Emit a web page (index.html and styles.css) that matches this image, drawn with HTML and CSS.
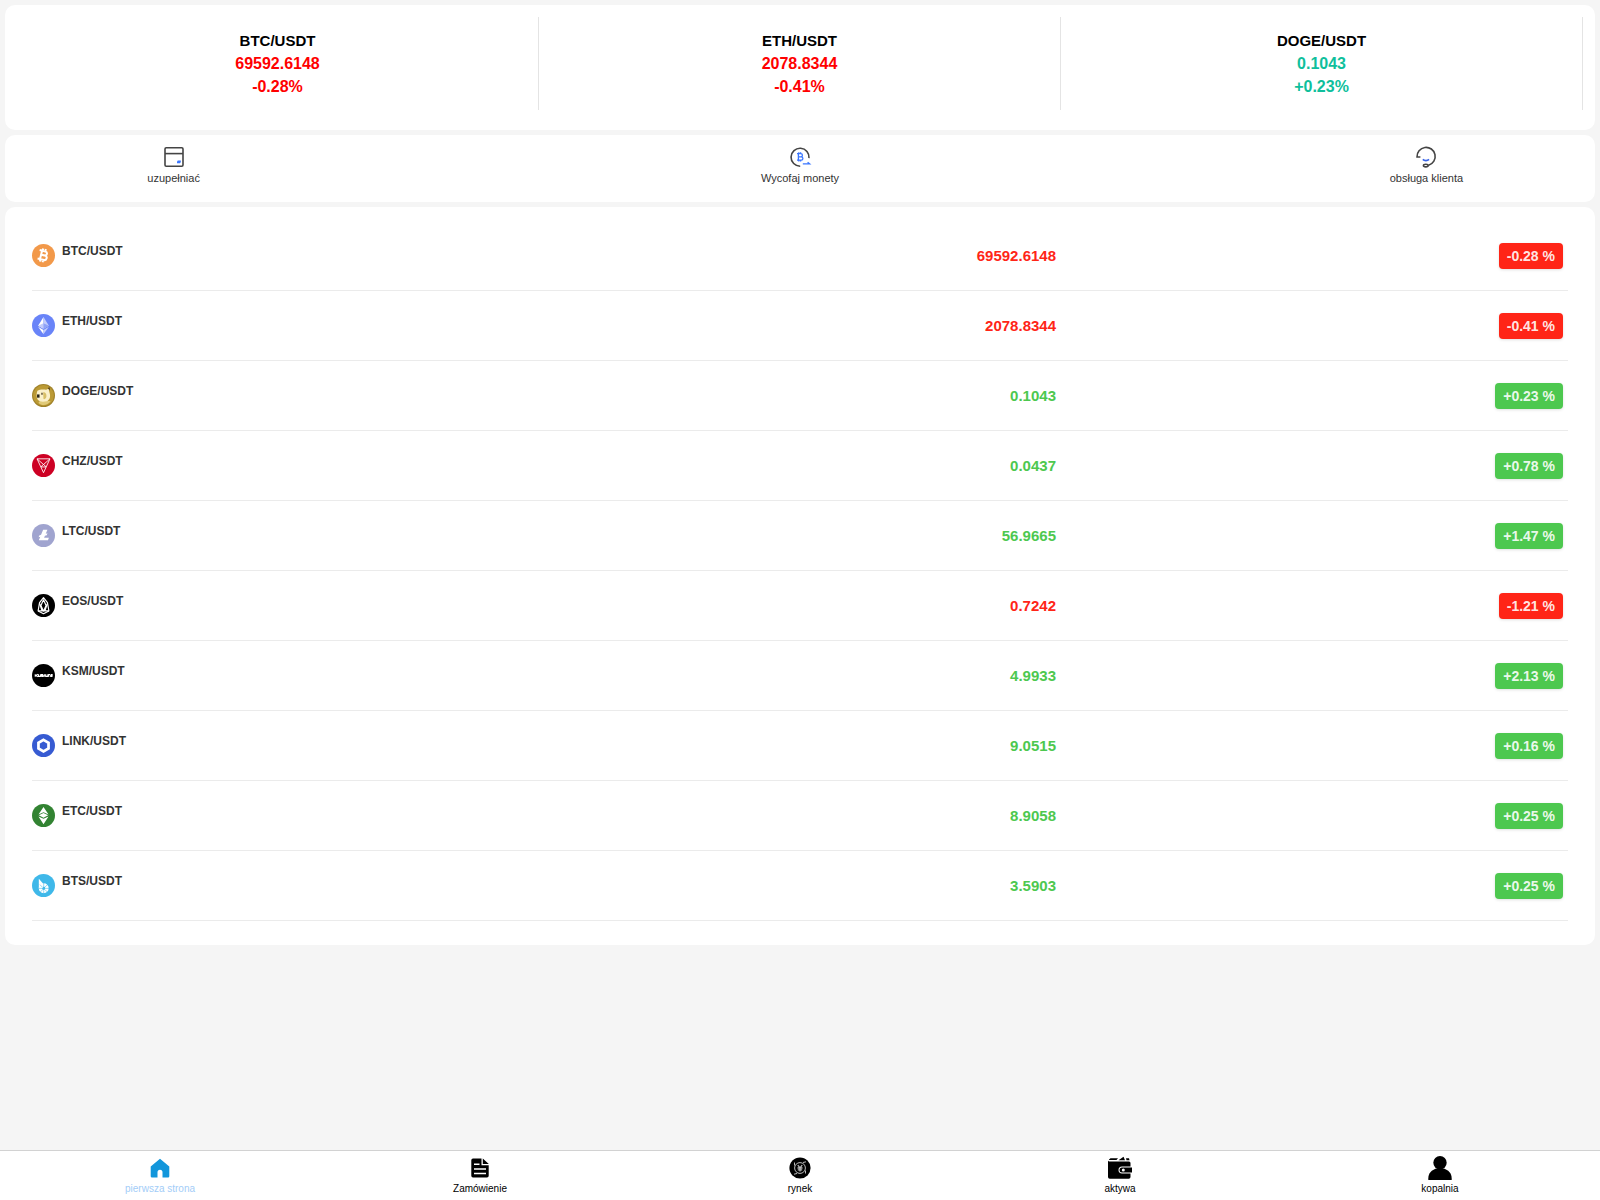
FILE: index.html
```html
<!DOCTYPE html>
<html lang="pl">
<head>
<meta charset="utf-8">
<meta name="viewport" content="width=device-width, initial-scale=1">
<title>pierwsza strona</title>
<link rel="stylesheet" href="styles.css">
</head>
<body>
<main class="page">
  <section class="card tickers">
    <div class="ticker down"><h2>BTC/USDT</h2><p>69592.6148</p><p>-0.28%</p></div>
    <div class="ticker down"><h2>ETH/USDT</h2><p>2078.8344</p><p>-0.41%</p></div>
    <div class="ticker up"><h2>DOGE/USDT</h2><p>0.1043</p><p>+0.23%</p></div>
  </section>

  <nav class="card actions">
    <a class="action" href="#deposit">
      <svg viewBox="0 0 24 24" fill="none" stroke="#444" stroke-width="1.6"><rect x="3" y="2.800" width="18" height="18.500" rx="1.2"/><path d="M3 8.600h18"/><path d="M15.800 15.400h3v1.600l-.8 1.200h-3v-1.800z" fill="#3a76ff" stroke="none"/></svg>
      <span>uzupełniać</span>
    </a>
    <a class="action" href="#withdraw">
      <svg viewBox="0 0 24 24" fill="none" stroke="#444" stroke-width="1.6"><path d="M21 13.2A9 9 0 1 0 12.2 21.2"/><g stroke="#3a76ff" stroke-width="1.300"><path d="M9 8.600h3.800a1.600 1.600 0 0 1 0 3.200H10.400h2.800a1.700 1.700 0 0 1 0 3.400H9M10.400 8.600v6.600M10.800 7.200v1.400M12.600 7.200v1.400M10.800 15.200v1.400M12.600 15.200v1.400"/><path d="M14.800 18.800h6.800l-2-1.600"/></g></svg>
      <span>Wycofaj monety</span>
    </a>
    <a class="action" href="#support">
      <svg viewBox="0 0 24 24" fill="none" stroke="#444" stroke-width="1.6"><path d="M6.400 12H3a9.100 9.100 0 1 1 11.600 8.200"/><ellipse cx="11.800" cy="20.600" rx="2.400" ry="1.300"/><path d="M8.800 14.400c1.600 1.600 4.600 1.600 6.200 0" stroke="#3a66e8" stroke-width="1.700"/></svg>
      <span>obsługa klienta</span>
    </a>
  </nav>

  <section class="card market">
    <table class="pairs">
      <tbody>
        <tr class="down">
          <td><div class="coin"><svg viewBox="0 0 32 32"><circle cx="16" cy="16" r="16" fill="#f2994a"/><g transform="rotate(14 16 16)" fill="none" stroke="#fff" stroke-width="2.800"><path d="M9 10h8.200a2.800 2.800 0 0 1 0 5.600H13h5a3.200 3.200 0 0 1 0 6.400H9M12.500 10v12M13.200 6.600v3.400M17 6.600v3.400M13.200 22v3.400M17 22v3.400"/></g></svg><span>BTC/USDT</span></div></td>
          <td>69592.6148</td><td><span class="badge">-0.28 %</span></td>
        </tr>
        <tr class="down">
          <td><div class="coin"><svg viewBox="0 0 32 32"><circle cx="16" cy="16" r="16" fill="#6984f8"/><path d="M16 4l-7.500 12.200L16 20.600z" fill="#fff"/><path d="M16 4l7.500 12.200L16 20.600z" fill="#c3cdfb"/><path d="M8.500 16.200L16 13v7.600z" fill="#c3cdfb"/><path d="M16 13l7.500 3.200L16 20.600z" fill="#8fa3f7"/><path d="M8.500 17.900L16 28v-5.700z" fill="#fff"/><path d="M23.500 17.900L16 28v-5.700z" fill="#c3cdfb"/></svg><span>ETH/USDT</span></div></td>
          <td>2078.8344</td><td><span class="badge">-0.41 %</span></td>
        </tr>
        <tr class="up">
          <td><div class="coin"><svg viewBox="0 0 32 32"><circle cx="16" cy="16" r="16" fill="#a0822a"/><circle cx="16" cy="16" r="14.500" fill="#bb9a35"/><path d="M9 26c2-3 5-4 9-3l8 1c-4 6-13 7-17 2z" fill="#e0ca78"/><path d="M7.500 9.500c3-2 8-2.500 12-1.500l3.500-1.500 1.500 6c1.500 5 .5 9.500-4 11.500-5 1-10 1-12.500-2-2-3-2-9-.5-12.500z" fill="#faf0ca"/><path d="M15.500 11.500c3-.5 5 2 4.500 6-.5 3-2.500 4-4 3.500z" fill="#d8bf68"/><path d="M7 14.500h3.500v4.500H7z" fill="#282418"/><path d="M13 12h1.800v3H13zM22 5.500l2.500-1 .5 4.500z" fill="#4a3a20"/></svg><span>DOGE/USDT</span></div></td>
          <td>0.1043</td><td><span class="badge">+0.23 %</span></td>
        </tr>
        <tr class="up">
          <td><div class="coin"><svg viewBox="0 0 32 32"><circle cx="16" cy="16" r="16" fill="#cd0124"/><g fill="none" stroke="#fff" stroke-width="1.200" stroke-linejoin="round"><path d="M7 6.700h18L16 26zM7 6.700l12.500 11M25 6.700l-12.500 11M12.500 18h7"/></g></svg><span>CHZ/USDT</span></div></td>
          <td>0.0437</td><td><span class="badge">+0.78 %</span></td>
        </tr>
        <tr class="up">
          <td><div class="coin"><svg viewBox="0 0 32 32"><circle cx="16" cy="16" r="16" fill="#a0a4cf"/><path d="M15.500 8h6l-2.400 5.600 2.400-.8-.9 2.700-2.600.9-1.200 2.800h6.700l-1.300 3.500H9.500l2-5-2.300.8.900-2.600 2.500-.9z" fill="#fff"/></svg><span>LTC/USDT</span></div></td>
          <td>56.9665</td><td><span class="badge">+1.47 %</span></td>
        </tr>
        <tr class="down">
          <td><div class="coin"><svg viewBox="0 0 32 32"><circle cx="16" cy="16" r="16" fill="#000"/><g fill="none" stroke="#fff" stroke-width="1.600" stroke-linejoin="round"><path d="M16 5l-5.500 7L8.500 23.500l7.500 4 7.500-4L21.500 12z"/><path d="M16 8l-3.600 8L16 24l3.600-8zM10.500 13l3.500 10.500h4L21.500 13M8.500 23.500h15"/></g></svg><span>EOS/USDT</span></div></td>
          <td>0.7242</td><td><span class="badge">-1.21 %</span></td>
        </tr>
        <tr class="up">
          <td><div class="coin"><svg viewBox="0 0 32 32"><circle cx="16" cy="16" r="16" fill="#000"/><path d="M4.500 14.200v3.600M8 14.200L5.500 16 8 17.800M9 14.200v3h2.700v-3M15.700 14.700h-2.500V16h2.500v1.300h-3M17.600 14.200v3.600M19.200 14.200v3H22v-3M23.400 17.800v-3.100h1.800M28 17.300h-2V16h2v-1.300h-2M28 15v2.800" fill="none" stroke="#fff" stroke-width="1.500"/></svg><span>KSM/USDT</span></div></td>
          <td>4.9933</td><td><span class="badge">+2.13 %</span></td>
        </tr>
        <tr class="up">
          <td><div class="coin"><svg viewBox="0 0 32 32"><circle cx="16" cy="16" r="16" fill="#375bd2"/><path d="M16 8.200l7 4v8l-7 4-7-4v-8z" fill="none" stroke="#fff" stroke-width="3.800"/></svg><span>LINK/USDT</span></div></td>
          <td>9.0515</td><td><span class="badge">+0.16 %</span></td>
        </tr>
        <tr class="up">
          <td><div class="coin"><svg viewBox="0 0 32 32"><circle cx="16" cy="16" r="16" fill="#328332"/><g fill="#fff"><path d="M16 4l7 10.500-7-3-7 3z"/><path d="M16 12.500l6.500 3.300-6.500 3.400-6.500-3.400z"/><path d="M16 20.500l7-3.200L16 28 9 17.300z"/></g></svg><span>ETC/USDT</span></div></td>
          <td>8.9058</td><td><span class="badge">+0.25 %</span></td>
        </tr>
        <tr class="up">
          <td><div class="coin"><svg viewBox="0 0 32 32"><circle cx="16" cy="16" r="16" fill="#3fb8e9"/><path d="M9.500 6.500l5.500 6.500v6l-5.500 1z" fill="#fff"/><circle cx="16.300" cy="19.800" r="4.600" fill="none" stroke="#fff" stroke-width="4.600"/><path d="M16.300 12.500v5M16.300 22.500V28M9 20h5M18.500 20H24M11 14.800l3.600 3.600M18 21.700l4 4M11 25.600l4-4M18 18.300l4-4" stroke="#3fb8e9" stroke-width=".8"/></svg><span>BTS/USDT</span></div></td>
          <td>3.5903</td><td><span class="badge">+0.25 %</span></td>
        </tr>
      </tbody>
    </table>
  </section>
</main>

<nav class="tabbar">
  <a class="tab active" href="#home">
    <svg viewBox="0 0 24 24"><path d="M12 2.800l9.300 7.600v9.800a1.300 1.300 0 0 1-1.300 1.300h-5.500v-5.300a2.500 2.500 0 0 0-5 0v5.300H4a1.300 1.300 0 0 1-1.300-1.300v-9.800z" fill="#1296db"/></svg>
    <span>pierwsza strona</span>
  </a>
  <a class="tab" href="#orders">
    <svg viewBox="0 0 24 24"><path d="M5 2.500h8.500v6.700h7.200v10.600a1.700 1.700 0 0 1-1.700 1.700H5a1.700 1.700 0 0 1-1.700-1.700V4.200A1.700 1.700 0 0 1 5 2.500zM14.800 2.500l6 5.500h-6z"/><path d="M6 8.300h5.500M6 12.900h12M6 17.400h12" stroke="#fff" stroke-width="1.500"/></svg>
    <span>Zamówienie</span>
  </a>
  <a class="tab" href="#market">
    <svg viewBox="0 0 24 24"><circle cx="12" cy="12" r="10.600"/><g fill="none" stroke="#bbb" stroke-width="1"><circle cx="12" cy="12" r="5.400"/><path d="M6.500 9.500V6.500M17.500 14.500v3M15 6.500l3-.7M9 17.500l-3 .7"/><path d="M9.800 9.200l2.200 2.600 2.200-2.600M9.500 12h5M9.800 13.800h4.400M12 12v3.600" stroke-width="1.300"/></g></svg>
    <span>rynek</span>
  </a>
  <a class="tab" href="#assets">
    <svg viewBox="0 0 24 24"><path d="M0 4.500A1.500 1.500 0 0 0 1.500 5.500H21a1.500 1.500 0 0 1 1.500 1.500v3.500H14a3 3 0 0 0 0 7h8.500v3.500a1.800 1.800 0 0 1-1.800 1.800H1.800A1.800 1.800 0 0 1 0 21zM1 3.400l1.500-1.200H10L8.500 4H1zM10.500 4.300l5-3.500 1.500 3.500zM18 2.200h3l.5 2H18.500z"/><path d="M14 11.500h10v5H14a2.500 2.500 0 0 1 0-5z"/><circle cx="15.300" cy="14" r="1.500" fill="#fff"/></svg>
    <span>aktywa</span>
  </a>
  <a class="tab" href="#mine">
    <svg viewBox="0 0 24 24"><circle cx="12" cy="6.700" r="6.700"/><path d="M.3 24v-1.500C.3 17 4 14 8 12.500h8c4 1.500 7.700 4.500 7.700 10V24z"/></svg>
    <span>kopalnia</span>
  </a>
</nav>
</body>
</html>
```
FILE: styles.css
```css
* {
  box-sizing: border-box;
}

body {
  margin: 0;
  min-height: 100vh;
  display: flex;
  flex-direction: column;
  background: #f5f5f5;
  color: #333;
  font-family: "Liberation Sans", Arial, sans-serif;
}

a {
  color: inherit;
  text-decoration: none;
}

.page {
  flex: 1;
  display: flex;
  flex-direction: column;
  gap: 5px;
  padding: 5px;
}

.card {
  background: #fff;
  border-radius: 10px;
}

/* Headline tickers */
.tickers {
  display: grid;
  grid-template-columns: repeat(3, 1fr);
  padding: 12px 12px 20px;
}

.ticker {
  padding: 13px 0 12px;
  border-right: 1px solid #e4e4e4;
  text-align: center;
  font-weight: bold;
  font-size: 16px;
  line-height: 23px;
}

.ticker h2 {
  margin: 0;
  color: #000;
  font-size: 15px;
  line-height: 22px;
}

.ticker p {
  margin: 0;
}

.ticker.down {
  color: #f00;
}

.ticker.up {
  color: #0fbf9c;
}

/* Shortcuts */
.actions {
  display: flex;
  justify-content: space-between;
  padding: 10px 12px 17px;
}

.action {
  width: 20%;
  display: flex;
  flex-direction: column;
  align-items: center;
  gap: 2px;
  font-size: 11px;
  line-height: 14px;
}

.action svg {
  width: 24px;
  height: 24px;
}

/* Pair list */
.market {
  padding: 14px 27px 24px;
}

.pairs {
  width: 100%;
  table-layout: fixed;
  border-collapse: separate;
  border-spacing: 0;
}

.pairs td {
  height: 70px;
  padding: 0;
  border-bottom: 1px solid #ebebeb;
  text-align: right;
  font-weight: bold;
  font-size: 15px;
}

.pairs td:last-child {
  padding-right: 5px;
}

.coin {
  display: flex;
  gap: 7px;
  font-size: 12px;
  line-height: 14px;
}

.coin svg {
  width: 23px;
  height: 23px;
}

.pairs .down {
  color: #ff2517;
}

.pairs .up {
  color: #4dc84f;
}

.pairs .coin {
  color: #333;
}

.badge {
  display: inline-block;
  padding: 0 8px;
  border-radius: 4px;
  color: rgba(255, 255, 255, 0.9);
  font-size: 14px;
  line-height: 26px;
  box-shadow: 0 1px 3px rgba(0, 0, 0, 0.12);
}

.down .badge {
  background: #ff2517;
}

.up .badge {
  background: #4dc84f;
}

/* Bottom navigation */
.tabbar {
  position: sticky;
  bottom: 0;
  display: grid;
  grid-template-columns: repeat(5, 1fr);
  padding: 5px 0;
  border-top: 1px solid #d2d2d2;
  background: #fff;
}

.tab {
  display: flex;
  flex-direction: column;
  align-items: center;
  gap: 3px;
  color: #000;
  font-size: 10px;
  line-height: 12px;
}

.tab svg {
  width: 24px;
  height: 24px;
}

.tab.active {
  color: #a3cdf8;
}
```
